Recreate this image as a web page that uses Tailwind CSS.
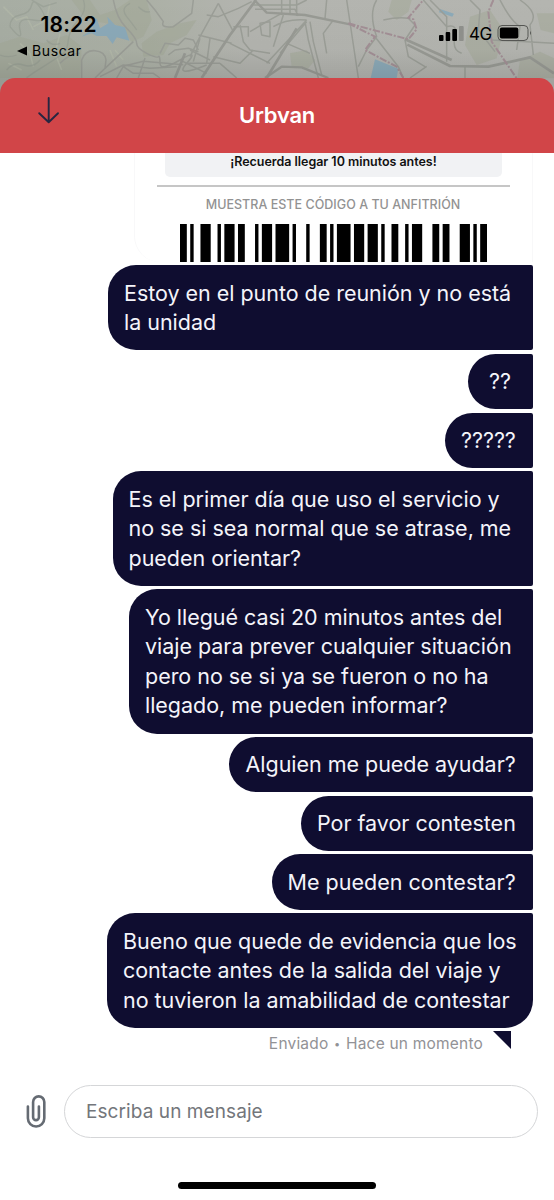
<!DOCTYPE html>
<html lang="es">
<head>
<meta charset="utf-8">
<title>Urbvan</title>
<script src="https://cdn.jsdelivr.net/npm/@tailwindcss/browser@4"></script>
</head>
<body class="w-[554px] h-[1200px] overflow-hidden bg-white font-['Inter',sans-serif]">
<div class="relative w-[554px] h-[1200px] flex flex-col overflow-hidden bg-white">
  <!-- map behind the status bar -->
  <svg class="absolute left-0 top-0 w-[554px] h-[100px]" viewBox="0 0 1662 300" fill="none">
    <defs>
      <linearGradient id="land" x1="0" x2="1" y1="0" y2="0"><stop offset="0" stop-color="#a7ada3"/><stop offset=".25" stop-color="#abb0a5"/><stop offset=".45" stop-color="#b3b4af"/><stop offset="1" stop-color="#b4b5b0"/></linearGradient>
      <linearGradient id="shade" x1="0" x2="0" y1="0" y2="1"><stop offset="0" stop-color="#000" stop-opacity="0"/><stop offset=".5" stop-color="#000" stop-opacity=".02"/><stop offset=".8" stop-color="#000" stop-opacity=".1"/></linearGradient>
    </defs>
    <path d="M0 0H1662V300H0z" fill="url(#land)"/>
    <g fill="#a2a896" opacity=".5">
      <path d="M215 0 270 0 300 45 345 30 390 0 440 0 455 60 430 110 395 125 350 75 260 60z"/>
      <path d="M425 130 470 95 540 70 590 60 560 105 510 130 490 165 430 170z"/>
      <path d="M0 130 60 110 130 130 200 105 245 140 240 234 0 234z"/>
      <path d="M1175 0h60l-10 35-35 25-25-25zM1410 50l60-20 40 60-20 85-60 20-35-60zM1560 180l60-25 42 20v60h-110zM1610 40h52v60l-40-10zM870 160l50-10 25 30-20 25-50-5z"/>
    </g>
    <g stroke="#b8bdab" stroke-width="5" opacity=".5">
      <path d="M10 20 50 60 80 50 100 90M60 130l30 30 10 40M150 10l-10 50-40 20M180 100l-15 60 20 50M330 150l20 50M25 190l40 20M370 180l-25-30"/>
    </g>
    <g stroke="#959c92" stroke-width="4" opacity=".6">
      <path d="M30 80Q30 50 60 45T95 15 125 30 100 60 60 90 30 80M95 0 130 20 170 8M250 0Q262 30 235 60T205 120 190 160 130 200 80 234M0 165Q25 175 50 165M390 10q-30 15-10 40t30 40M415 20q20 20 35 15"/>
      <path d="M20 210q20-25 50-15t50-15M140 120q15 20 40 10"/>
    </g>
    <path d="M245 110 280 85 270 65 290 55 300 85 325 70 322 50 345 75 375 82 388 122 350 112 338 132 320 108 290 108 275 100z" fill="#8ba9b8"/>
    <path d="m1125 178 70 28-5 28h-78zM1320 27l42 14-5 9-40-13z" fill="#8caab8"/>
    <g stroke="#9b9e97" stroke-width="4.5" stroke-linejoin="round">
      <path d="M340 0Q350 55 380 85T410 130 440 160 475 170 480 190 540 180 560 190 620 195"/>
      <path d="M245 234V180Q255 150 285 152T318 180L315 205M180 190q30-30 60-30M315 205l-30 29M315 205l85-80M350 234l20-35 60-15 60 5 60 5M300 230l70-35 80 10 80-5M370 200l30 20 60 0 20 14M415 234l20-60"/>
      <path d="M440 0 465 30 490 65Q480 85 520 80L575 40 580 0M480 160l15-30 40 5 20-20 25 5 15 30M505 165l20-15 40-5 30 10"/>
      <path d="M655 10 600 110 570 170M655 10l45 85M620 45l35 5 60-25 40-20M595 105l100 25M700 80h45v30M720 75l10 50 20 25 60 10M780 70l5 35 25 5V65zM570 150l60 30M540 180l80 40M600 115l-20 70M630 115l-10 75M560 190l100 0M640 170l80 20 40-40M690 130l120 60M660 190l50 44"/>
      <path d="M760 15h130l30-15M765 28h120l10 20M845 0v45M870 0v45M890 0v48M980 0l-5 55M850 45 820 140M920 60 800 190M920 65 840 160M820 80q40-25 100-20M915 65l10 55 30 114M930 65l10 60 25 100M1000 60l-30 40 10 60M1040 0l35 234M860 130l70 30M750 95l50-30 45-25"/>
      <path d="M1130 0q-25 40 0 110l-30 40-25 50M1150 60q45-10 75-5l20 20-30 45M1215 120l10 50 50 30M1125 110l70 90 15 34M1270 0l70 80M1290 0l50 50V185M1340 80q35-10 25 30t20 50M1410 0l30 30-5 60 50 65M1500 0q30 60 60 80l-10 70M1230 234l50-35M1395 200v34M1475 120l187 10M1560 0q60 40 30 75l10 90"/>
    </g>
    <g stroke="#989a94" stroke-width="8" stroke-linejoin="round">
      <path d="M768 0 690 105 605 234M890 85 800 234M555 160l-30 74"/>
      <path stroke-width="7" d="M763 0 800 38 915 45 1050 73M795 234l50-34 60 2 80 32"/>
      <path d="M1215 118 1355 180M1222 134 1350 198 1465 200 1590 172 1662 220"/>
    </g>
    <g stroke="#a28f95" stroke-width="6" stroke-dasharray="22 5 6 5">
      <path d="m1045 70 180 48 25-30-10-30-15-5 45-53M1045 70l80 40-30 40 95 50 20 34M1480 0l-15 35 10 90 75 110"/>
    </g>
    <path d="M0 0H1662V300H0z" fill="url(#shade)"/>
  </svg>
  <!-- status bar -->
  <div class="relative h-[78px] shrink-0 flex justify-between text-black">
    <div class="pl-[17px] pt-[12px]">
      <div class="pl-[23.5px] text-[21px] leading-[25px] font-semibold whitespace-nowrap tracking-[0.2px]">18:22</div>
      <div class="flex items-center gap-[5px] mt-[3px]">
        <svg class="w-[10px] h-[10px]" viewBox="0 0 10 10"><path d="M0 5 10 .5v9z"/></svg>
        <span class="text-[14px] leading-[22px] tracking-[0.6px]">Buscar</span>
      </div>
    </div>
    <div class="flex items-start pt-[23px] pr-[23px]">
      <svg class="w-[25px] h-[18px]" viewBox="0 0 25 18"><rect y="12" width="4.5" height="6" rx="1"/><rect x="6.7" y="9" width="4.5" height="9" rx="1"/><rect x="13.3" y="6" width="4.7" height="12" rx="1"/><rect x="20" y="3" width="4.7" height="15" rx="1" fill="#8e8f8b"/></svg>
      <span class="ml-[5px] w-[24px] text-[17px] leading-[22px] tracking-[-0.6px]">4G</span>
      <svg class="ml-[4px] mt-[1px] w-[35px] h-[18px] mr-[-1px]" viewBox="0 0 35 18"><rect x="1" y="1.5" width="30" height="15" rx="4" fill="none" stroke="#555653"/><rect x="2.8" y="3.5" width="18.5" height="11" rx="2"/><path d="M33 7q2 2 0 4z" fill="#555653"/></svg>
    </div>
  </div>
  <!-- header -->
  <header class="relative h-[75px] shrink-0 rounded-t-[15px] bg-[#d14548] flex items-center justify-center">
    <svg class="absolute left-[37px] top-[18px] w-[24px] h-[28px]" viewBox="0 0 24 28" fill="none" stroke="#272641" stroke-width="1.9" stroke-linecap="round" stroke-linejoin="round"><path d="M11.7 2v24M2.2 17.2l9.5 9 9.3-9"/></svg>
    <h1 class="text-white text-[22px] font-semibold whitespace-nowrap tracking-[-0.2px]">Urbvan</h1>
  </header>
  <!-- conversation -->
  <main class="flex flex-col h-[907px] shrink-0">
    <section class="ml-[134px] w-[399px] h-[109px] shrink-0 border-x border-[#f8f8f9] rounded-bl-[26px] flex flex-col">
      <div class="ml-[30px] w-[337px] h-[24px] shrink-0 rounded-b-[5px] bg-[#f1f2f4] text-center text-[12.5px] leading-[17px] font-semibold text-[#111] whitespace-nowrap tracking-[-0.03px]">¡Recuerda llegar 10 minutos antes!</div>
      <div class="ml-[22px] mt-[8px] w-[353px] h-[2px] shrink-0 bg-[#c6c6c6]"></div>
      <div class="mt-[8px] -ml-[1px] text-center text-[12.5px] leading-[20px] font-medium text-[#929292] whitespace-nowrap tracking-[0.03px]">MUESTRA ESTE CÓDIGO A TU ANFITRIÓN</div>
      <svg class="ml-[45px] mt-[9px] w-[307px] h-[38px] shrink-0" viewBox="0 0 90 38" preserveAspectRatio="none"><path d="M0 0h2v38H0zM3 0h1v38H3zM6 0h3v38H6zM11 0h1v38h-1zM13 0h3v38h-3zM17 0h2v38h-2zM22 0h1v38h-1zM24 0h3v38h-3zM28 0h4v38h-4zM33 0h1v38h-1zM37 0h1v38h-1zM41 0h2v38h-2zM44 0h1v38h-1zM46 0h4v38h-4zM51 0h3v38h-3zM55 0h3v38h-3zM59 0h1v38h-1zM62 0h2v38h-2zM66 0h1v38h-1zM68 0h3v38h-3zM74 0h2v38h-2zM77 0h2v38h-2zM82 0h3v38h-3zM86 0h1v38h-1zM88 0h2v38h-2z"/></svg>
    </section>
    <section class="mt-[3.2px] pr-[21.5px] flex flex-col items-end gap-[3.1px] text-[21.5px] leading-[29.45px] tracking-[-0.03px] text-[#f4f4fa] whitespace-nowrap">
      <div class="w-[424.5px] pl-[16px] pt-[13.5px] pb-[12.9px] rounded-l-[28px] rounded-r-[2px] bg-[#0f0d30]">Estoy en el punto de reunión y no está<br>la unidad</div>
      <div class="w-[64.5px] pl-[21px] pt-[13.5px] pb-[12.9px] rounded-l-[28px] rounded-r-[2px] bg-[#0f0d30]">??</div>
      <div class="w-[87.5px] pl-[16px] pt-[13.5px] pb-[12.9px] rounded-l-[28px] rounded-r-[2px] bg-[#0f0d30]">?????</div>
      <div class="w-[420px] pl-[16px] pt-[13.5px] pb-[12.9px] rounded-l-[28px] rounded-r-[2px] bg-[#0f0d30]">Es el primer día que uso el servicio y<br>no se si sea normal que se atrase, me<br>pueden orientar?</div>
      <div class="w-[403.5px] pl-[16px] pt-[13.5px] pb-[12.9px] rounded-l-[28px] rounded-r-[2px] bg-[#0f0d30]">Yo llegué casi 20 minutos antes del<br>viaje para prever cualquier situación<br>pero no se si ya se fueron o no ha<br>llegado, me pueden informar?</div>
      <div class="w-[303.5px] pl-[16.5px] pt-[13.5px] pb-[12.9px] rounded-l-[28px] rounded-r-[2px] bg-[#0f0d30]">Alguien me puede ayudar?</div>
      <div class="w-[231.5px] pl-[16px] pt-[13.5px] pb-[12.9px] rounded-l-[28px] rounded-r-[2px] bg-[#0f0d30]">Por favor contesten</div>
      <div class="w-[261px] pl-[16px] pt-[13.5px] pb-[12.9px] rounded-l-[28px] rounded-r-[2px] bg-[#0f0d30] tracking-[0.02px]">Me pueden contestar?</div>
      <div class="w-[425.5px] pl-[16px] pt-[13.5px] pb-[12.9px] rounded-l-[28px] rounded-tr-[2px] rounded-br-[28px] bg-[#0f0d30]">Bueno que quede de evidencia que los<br>contacte antes de la salida del viaje y<br>no tuvieron la amabilidad de contestar</div>
    </section>
    <div class="mt-[3.3px] pr-[43px] flex justify-end items-start gap-[10px]">
      <span class="mt-[1px] text-[15.5px] leading-[24px] tracking-[0.2px] text-[#929296] whitespace-nowrap">Enviado <span class="text-[11px] align-[1px] mx-[1px]">•</span> Hace un momento</span>
      <svg class="w-[18px] h-[18px]" viewBox="0 0 18 18"><path d="M0 0h18v18z" fill="#0f0d30"/></svg>
    </div>
  </main>
  <!-- composer -->
  <footer class="pt-[25px] pl-[25px] flex items-center">
    <svg class="w-[22px] h-[34px]" viewBox="0 0 22 34" fill="none" stroke="#656b73" stroke-width="2.6" stroke-linecap="round"><path d="M2.9 11.5v11.8a8.2 8.2 0 0 0 16.4 0V7a5.6 5.6 0 0 0-11.2 0v15.2a2.9 2.9 0 0 0 5.8 0V11.5"/></svg>
    <div class="ml-[17px] w-[474px] h-[53px] rounded-full border border-[#d5d6d8] pl-[21px] pt-[2px] flex items-center text-[19px] tracking-[0.08px] text-[#73767b]">Escriba un mensaje</div>
  </footer>
  <div class="mt-[43.5px] ml-[178px] w-[198px] h-[7px] rounded-full bg-black shrink-0"></div>
</div>
</body>
</html>
